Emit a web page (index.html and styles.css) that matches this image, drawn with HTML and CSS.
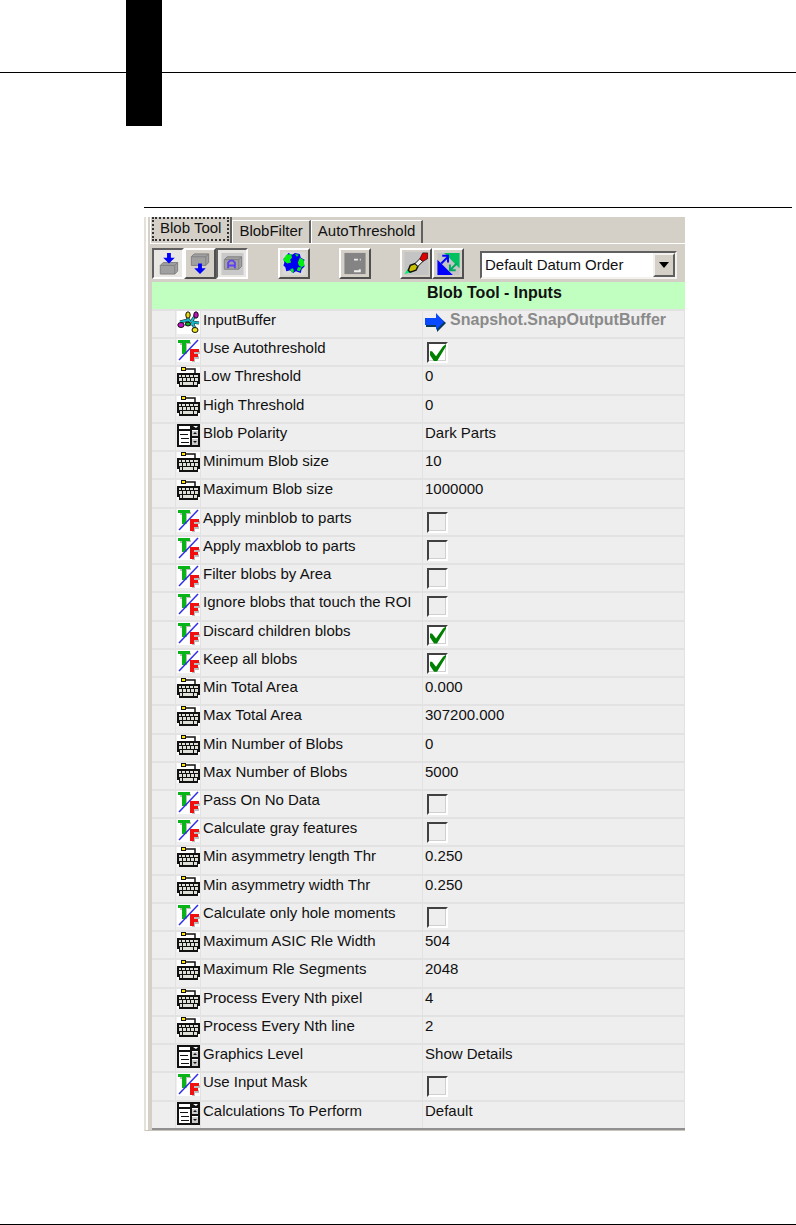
FILE: index.html
```html
<!DOCTYPE html>
<html lang="en">
<head>
<meta charset="utf-8">
<title>Blob Tool</title>
<link rel="stylesheet" href="styles.css">
</head>
<body>
<svg class="defs" aria-hidden="true">
  <symbol id="key" viewBox="0 0 23 23">
    <path fill="#fff" d="M0 0h23v20H0z"/>
    <path fill="none" stroke="#111" stroke-width="1.5" d="M8 2h10v5"/>
    <path fill="#111" d="M4 0h5v4H4zM0 6h23v11h-2v3H2v-3H0z"/>
    <path fill="#ffe900" d="M5 1h3v2H5z"/>
    <path fill="#dfe1d8" d="M2 8h2v2H2zM5 8h3v2H5zM9 8h3v2H9zM13 8h3v2h-3zM17 8h4v2h-4zM2 11h3v3H2zM6 11h3v3H6zM10 11h3v3h-3zM14 11h3v3h-3zM18 11h3v3h-3zM3 15h2v3H3zM6 15h10v3H6zM17 15h3v3h-3z"/>
  </symbol>
  <symbol id="tf" viewBox="0 0 23 23">
    <path fill="#fff" d="M0 0h23v23H0z"/>
    <path fill="#bbb" d="M3 3h11v2H10v10H7V6H3zM15 12h8v3h-5v2h4v3h-4v3h-3z"/>
    <path fill="#08b418" d="M1 1h12v3H9v11H5V4H1z"/>
    <path stroke="#3030e8" stroke-width="1.5" d="M2 21 21 1"/>
    <path fill="#f01010" d="M13 10h9v3h-5v2h4v3h-4v4h-4z"/>
  </symbol>
  <symbol id="list" viewBox="0 0 23 23">
    <path fill="#111" d="M0 0h23v23H0z"/>
    <path fill="#fff" d="M2 2h11v3H2zM2 7h11v14H2z"/>
    <path fill="#ccc" d="M15 6h6v6h-6zM15 14h6v7h-6z"/>
    <path fill="#fff" d="M16 2h5l-2 2zM15 6h6v1h-6zM15 14h6v1h-6z"/>
    <path fill="#111" d="M3 10h8v1H3zM4 14h8v1H4zM4 18h8v1H4zM16 10l2-2 2 2zM16 17h4l-2 2z"/>
  </symbol>
  <symbol id="nodes" viewBox="0 0 23 23">
    <path fill="#fff" d="M0 0h23v23H0z"/>
    <path fill="none" stroke="#222" stroke-width="3" d="m10 6 3 5M18 5l-4 6M3 11l8-2M8 13h8l2 5M15 11l7 1"/>
    <path fill="none" stroke="#18b8c8" stroke-width="2" d="m10 6 3 5M18 5l-4 6M3 11l8-2M8 13h8l2 5M15 11l7 1"/>
    <g stroke="#111"><ellipse cx="11" cy="4" rx="2.2" ry="3.2" fill="#e8dc10"/><ellipse cx="19" cy="4" rx="2.2" ry="3.2" fill="#c010c0"/><ellipse cx="4" cy="14" rx="3.2" ry="2.5" fill="#c010c0"/><ellipse cx="11" cy="13" rx="2.5" ry="2" fill="#10b020"/><ellipse cx="18" cy="19" rx="3" ry="2.5" fill="#f0e820"/></g>
  </symbol>
</svg>

<header class="page-head">
  <div class="head-line head-line-left"></div>
  <div class="head-block"></div>
  <div class="head-line"></div>
</header>

<main class="content">
  <section class="panel">
    <nav class="tabs">
      <button class="tab active" type="button"><span>Blob Tool</span></button>
      <button class="tab" type="button"><span>BlobFilter</span></button>
      <button class="tab" type="button"><span>AutoThreshold</span></button>
    </nav>
    <div class="tools">
      <button class="tool pressed" type="button" aria-label="Inputs"><svg viewBox="0 0 26 26"><path fill="#a0a0a0" stroke="#808080" d="M5 15l3-3h15v9l-3 3H5z"/><path fill="none" stroke="#808080" d="M5 15h15v9M20 15l3-3"/><path fill="#00f" d="M12 2h4v5h4l-6 6-6-6h4z"/></svg></button>
      <button class="tool" type="button" aria-label="Outputs"><svg viewBox="0 0 26 26"><path fill="#a0a0a0" stroke="#808080" d="M4 6l3-3h15v9l-3 3H4z"/><path fill="none" stroke="#808080" d="M4 6h15v9M19 6l3-3"/><path fill="#00f" d="M11 13h4v5h4l-6 6-6-6h4z"/></svg></button>
      <button class="tool pressed" type="button" aria-label="Advanced"><svg viewBox="0 0 26 26"><path fill="#c9c9c9" d="M2 2h23v23H2z"/><path fill="#a0a0a0" stroke="#808080" d="M5 9l3-3h15v10l-3 3H5z"/><path fill="none" stroke="#808080" d="M5 9h15v10M20 9l3-3"/><path fill="none" stroke="#6040f0" stroke-width="2" d="M9 18v-6l2-2h3l2 2v6M9 15h7"/></svg></button>
      <button class="tool gap-l" type="button" aria-label="Blobs"><svg viewBox="0 0 26 26"><path fill="#d8d8d8" d="M1 1h24v24H1z"/><path fill="#0000f0" d="M7 2l4 2 3-2 5 1 1 4 4 2-1 3 1 4-3 3-1 4-5-2-3 2-3-3-4 1-1-4-2-2 1-3-1-4 3-2z"/><path fill="#00f010" d="M5 4l5-1 1 4-2 2 1 3-4 1-4-3 1-3zM19 7l4 2 1 6-3 2-3-2-1-3zM17 17l4 0-2 4-3-1zM9 19l3-1 1 3-2 2zM14 3l4 1-2 2z"/></svg></button>
      <button class="tool gap-m" type="button" aria-label="Face"><svg viewBox="0 0 26 26"><path fill="#848484" d="M2 2h22v22H2z"/><path stroke="#eee" stroke-width="2" fill="none" d="M12 9h4M18 9h1M12 21h6v-2"/></svg></button>
      <button class="tool gap-m" type="button" aria-label="Paint"><svg viewBox="0 0 26 26"><path fill="#c4c4c4" d="M1 1h25v24H1z"/><path fill="#00f070" d="M1 24l4-6 4 4z"/><path fill="#c8c000" stroke="#111" stroke-width="1.5" d="M5 20l2-5 5-2 3 3-2 4-6 2z"/><path fill="#eee" stroke="#111" d="M12 13l5-5 3 3-5 5z"/><path fill="#e00000" stroke="#111" stroke-width=".7" d="M17 8l3-6h5v6l-5 3z"/></svg></button>
      <button class="tool" type="button" aria-label="Transfer"><svg viewBox="0 0 26 26"><path fill="#c4c4c4" d="M2 2h23v23H2z"/><path fill="#00f" d="M2 9l16 16H2z"/><path fill="#00c060" d="M9 2h16v16z"/><path fill="none" stroke="#00f" stroke-width="2" d="M6 13l7-7M7 5h6v7"/><path fill="none" stroke="#00a860" stroke-width="2" d="M22 13l-7 7M15 14v6h6"/></svg></button>
      <label class="order"><select aria-label="Datum order"><option>Default Datum Order</option></select></label>
    </div>
    <table class="grid">
      <colgroup><col class="c-edge"><col class="c-icon"><col class="c-name"><col></colgroup>
      <thead><tr><th colspan="3"></th><th scope="col">Blob Tool - Inputs</th></tr></thead>
      <tbody>
      <tr><td></td><td><svg class="ic"><use href="#nodes"/></svg></td><td>InputBuffer</td><td><a class="source" href="#"><svg viewBox="0 0 21 19"><path fill="#073a58" d="M1 7h11V2l9 8-9 9v-5H1z"/><path fill="#0848ff" d="M0 5h11V0l8 9-8 8v-5H0z"/></svg>Snapshot.SnapOutputBuffer</a></td></tr>
      <tr><td></td><td><svg class="ic"><use href="#tf"/></svg></td><td><label for="auto">Use Autothreshold</label></td><td><input id="auto" type="checkbox" checked></td></tr>
      <tr><td></td><td><svg class="ic"><use href="#key"/></svg></td><td>Low Threshold</td><td>0</td></tr>
      <tr><td></td><td><svg class="ic"><use href="#key"/></svg></td><td>High Threshold</td><td>0</td></tr>
      <tr><td></td><td><svg class="ic"><use href="#list"/></svg></td><td>Blob Polarity</td><td>Dark Parts</td></tr>
      <tr><td></td><td><svg class="ic"><use href="#key"/></svg></td><td>Minimum Blob size</td><td>10</td></tr>
      <tr><td></td><td><svg class="ic"><use href="#key"/></svg></td><td>Maximum Blob size</td><td>1000000</td></tr>
      <tr><td></td><td><svg class="ic"><use href="#tf"/></svg></td><td><label for="minblob">Apply minblob to parts</label></td><td><input id="minblob" type="checkbox"></td></tr>
      <tr><td></td><td><svg class="ic"><use href="#tf"/></svg></td><td><label for="maxblob">Apply maxblob to parts</label></td><td><input id="maxblob" type="checkbox"></td></tr>
      <tr><td></td><td><svg class="ic"><use href="#tf"/></svg></td><td><label for="area">Filter blobs by Area</label></td><td><input id="area" type="checkbox"></td></tr>
      <tr><td></td><td><svg class="ic"><use href="#tf"/></svg></td><td><label for="roi">Ignore blobs that touch the ROI</label></td><td><input id="roi" type="checkbox"></td></tr>
      <tr><td></td><td><svg class="ic"><use href="#tf"/></svg></td><td><label for="children">Discard children blobs</label></td><td><input id="children" type="checkbox" checked></td></tr>
      <tr><td></td><td><svg class="ic"><use href="#tf"/></svg></td><td><label for="keep">Keep all blobs</label></td><td><input id="keep" type="checkbox" checked></td></tr>
      <tr><td></td><td><svg class="ic"><use href="#key"/></svg></td><td>Min Total Area</td><td>0.000</td></tr>
      <tr><td></td><td><svg class="ic"><use href="#key"/></svg></td><td>Max Total Area</td><td>307200.000</td></tr>
      <tr><td></td><td><svg class="ic"><use href="#key"/></svg></td><td>Min Number of Blobs</td><td>0</td></tr>
      <tr><td></td><td><svg class="ic"><use href="#key"/></svg></td><td>Max Number of Blobs</td><td>5000</td></tr>
      <tr><td></td><td><svg class="ic"><use href="#tf"/></svg></td><td><label for="pass">Pass On No Data</label></td><td><input id="pass" type="checkbox"></td></tr>
      <tr><td></td><td><svg class="ic"><use href="#tf"/></svg></td><td><label for="gray">Calculate gray features</label></td><td><input id="gray" type="checkbox"></td></tr>
      <tr><td></td><td><svg class="ic"><use href="#key"/></svg></td><td>Min asymmetry length Thr</td><td>0.250</td></tr>
      <tr><td></td><td><svg class="ic"><use href="#key"/></svg></td><td>Min asymmetry width Thr</td><td>0.250</td></tr>
      <tr><td></td><td><svg class="ic"><use href="#tf"/></svg></td><td><label for="hole">Calculate only hole moments</label></td><td><input id="hole" type="checkbox"></td></tr>
      <tr><td></td><td><svg class="ic"><use href="#key"/></svg></td><td>Maximum ASIC Rle Width</td><td>504</td></tr>
      <tr><td></td><td><svg class="ic"><use href="#key"/></svg></td><td>Maximum Rle Segments</td><td>2048</td></tr>
      <tr><td></td><td><svg class="ic"><use href="#key"/></svg></td><td>Process Every Nth pixel</td><td>4</td></tr>
      <tr><td></td><td><svg class="ic"><use href="#key"/></svg></td><td>Process Every Nth line</td><td>2</td></tr>
      <tr><td></td><td><svg class="ic"><use href="#list"/></svg></td><td>Graphics Level</td><td>Show Details</td></tr>
      <tr><td></td><td><svg class="ic"><use href="#tf"/></svg></td><td><label for="mask">Use Input Mask</label></td><td><input id="mask" type="checkbox"></td></tr>
      <tr><td></td><td><svg class="ic"><use href="#list"/></svg></td><td>Calculations To Perform</td><td>Default</td></tr>
      </tbody>
    </table>
  </section>
</main>
<footer class="page-foot"></footer>
</body>
</html>
```
FILE: styles.css
```css
*, *::before, *::after { box-sizing: border-box; }

body {
  margin: 0;
  min-height: 100vh;
  display: flex;
  flex-direction: column;
  background: #fff;
  color: #111;
  font: 15px/18px "Liberation Sans", Arial, sans-serif;
}

.defs { position: absolute; width: 0; height: 0; }

.page-head { display: flex; align-items: flex-start; }
.head-line { flex: 1; height: 73px; border-bottom: 1px solid #000; }
.head-line-left { flex: 0 0 126px; }
.head-block { width: 36px; height: 126px; background: #000; }

.content {
  margin: 81px 4px 0 144px;
  padding-top: 9px;
  border-top: 1px solid #000;
}

.page-foot { margin-top: auto; border-top: 1px solid #000; }

.panel {
  max-width: 541px;
  background: #d4d0c8;
  border-left: 2px solid #e4e0da;
  border-bottom: 1px solid #c8c4bc;
  box-shadow: inset 2px 0 #fff;
}

.tabs {
  display: flex;
  align-items: flex-end;
  margin-left: 4px;
  height: 27px;
  border-bottom: 1px solid #fff;
}
.tab {
  height: 23px;
  padding: 0 6px 3px;
  border: 0;
  border-left: 1px solid #fff;
  border-top: 1px solid #fff;
  border-right: 2px solid #606060;
  background: #d4d0c8;
  color: #111;
  font: inherit;
}
.tab.active { height: 26px; padding: 0 1px 2px; border-top: 0; }
.tab span { display: block; }
.tab.active span { padding: 0 6px 2px; border: 2px dotted #333; }

.tools { display: flex; align-items: center; height: 38px; padding-left: 6px; }
.tool {
  flex: none;
  width: 32px;
  height: 31px;
  padding: 1px;
  background: #d4d0c8;
  border: 2px solid;
  border-color: #fff #505050 #505050 #fff;
}
.tool svg { display: block; width: 26px; height: 25px; }
.tool.pressed { background: #e9e7e3; border-color: #606060 #fff #fff #606060; }
.gap-l { margin-left: 30px; }
.gap-m { margin-left: 29px; }

.order {
  position: relative;
  flex: 0 1 197px;
  margin: 4px 8px 0 16px;
}
.order select {
  appearance: none;
  display: block;
  width: 100%;
  height: 28px;
  padding: 0 24px 0 3px;
  border: 2px solid;
  border-color: #606060 #f4f2ee #f4f2ee #606060;
  border-radius: 0;
  background: #fff;
  color: #111;
  font: inherit;
}
.order::before {
  content: "";
  position: absolute;
  top: 2px;
  right: 2px;
  width: 22px;
  height: 24px;
  border: 2px solid;
  border-color: #f4f2ee #606060 #606060 #f4f2ee;
  background: #d4d0c8;
  pointer-events: none;
}
.order::after {
  content: "";
  position: absolute;
  top: 11px;
  right: 8px;
  border: 5px solid transparent;
  border-top: 6px solid #000;
  border-bottom: 0;
  pointer-events: none;
}

.grid {
  width: calc(100% - 6px);
  height: 848px;
  margin-left: 6px;
  table-layout: fixed;
  border-collapse: separate;
  border-spacing: 0;
  border-bottom: 2px solid #909090;
  background: #eee;
}
.c-edge { width: 24px; }
.c-icon { width: 25px; }
.c-name { width: 222px; }

th {
  height: 27px;
  padding: 2px 4px;
  background: #c0ffc0;
  font-size: 16px;
  text-align: left;
  vertical-align: top;
  white-space: nowrap;
}
td {
  height: 28px;
  padding: 0 2px;
  border-top: 2px solid #e2e2e2;
  border-right: 1px solid #e2e2e2;
  vertical-align: top;
  white-space: nowrap;
}
td:nth-child(2) { padding: 0 0 0 1px; }
.ic { display: block; width: 23px; height: 23px; }

.source {
  display: flex;
  align-items: flex-start;
  gap: 4px;
  color: #8a8a8a;
  font-size: 16px;
  font-weight: bold;
  text-decoration: none;
}
.source svg { flex: none; width: 21px; height: 19px; margin-top: 2px; }

input[type="checkbox"] {
  appearance: none;
  display: block;
  width: 21px;
  height: 21px;
  margin: 3px 0 0 2px;
  border: 2px solid;
  border-color: #404040 #fff #fff #404040;
  background: #eee;
  box-shadow: inset -1px -1px #d0d0d0;
}
input[type="checkbox"]:checked { background: #fff; }
input[type="checkbox"]:checked::before {
  content: "";
  display: block;
  width: 17px;
  height: 17px;
  background: #008000;
  clip-path: polygon(1px 7px, 3px 7px, 7px 12px, 14px 2px, 17px 0, 17px 2px, 8px 17px, 5px 17px, 1px 11px);
}
```
